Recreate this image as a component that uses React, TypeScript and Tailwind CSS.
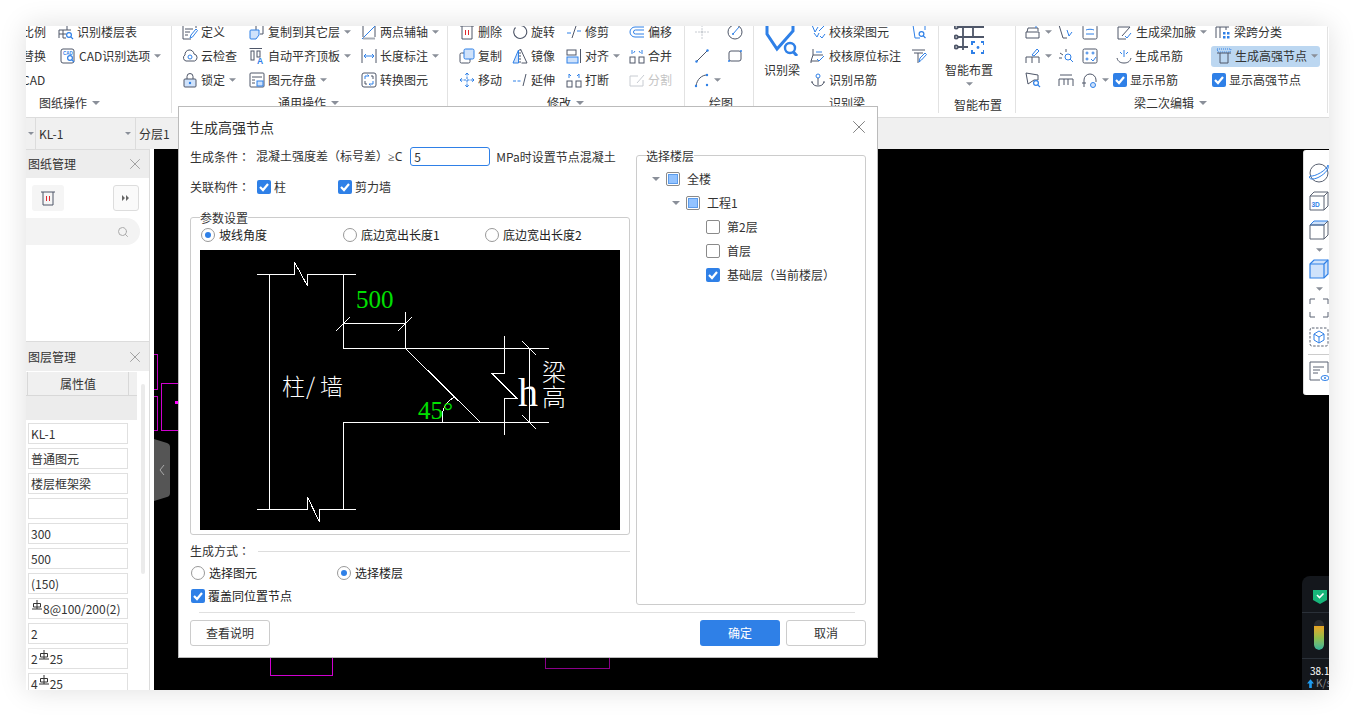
import React from 'react';
import { X, Search } from 'lucide-react';

const B = '#2f80e7';
const L = '#cfe2fb';
const R = '#e0282e';

const Ic: React.FC<{ children: React.ReactNode; size?: string }> = ({ children, size = 'w-4 h-4' }) => (
  <svg viewBox="0 0 16 16" className={`${size} shrink-0`} fill="none" stroke="#4e5668" strokeWidth="1">
    {children}
  </svg>
);

const Caret: React.FC<{ cls?: string }> = ({ cls = 'w-[7px] h-1 ml-[4px]' }) => (
  <svg viewBox="0 0 8 4" className={`${cls} shrink-0`}>
    <path d="M0 0H8L4 4Z" fill="#8a8f99" />
  </svg>
);

const Mag = ({ x = 11, y = 11 }: { x?: number; y?: number }) => (
  <g stroke={B} strokeWidth="1.2">
    <circle cx={x} cy={y} r="2.4" />
    <path d={`M${x + 1.8} ${y + 1.8}L${x + 4} ${y + 4}`} />
  </g>
);

const icons: Record<string, React.ReactNode> = {
  floorTable: <><path d="M1 14V6H13M1 10H8M5 6V14H8M9 1V6" /><Mag /></>,
  cadOpt: <><rect x="1" y="1" width="13" height="14" rx="2" /><text x="3" y="6.5" fontSize="4.5" fill={B} stroke="none" fontFamily="Liberation Sans" fontWeight="700">CAD</text><Mag x={10} y={10} /></>,
  define: <><path d="M14 4V0H1V15H9M3 5H11M3 8H8M3 11H6" /><path d="M8 14L9 11L14 5L15.5 6.5L10.5 13Z" stroke={B} /></>,
  cloud: <><path d="M4 13A3.3 3.3 0 0 1 3 7A4.5 4.5 0 0 1 12 6A3.6 3.6 0 0 1 12.5 13Z" /><circle cx="8" cy="9" r="2" stroke={B} /></>,
  lock: <><path d="M5 7V4.5A3 3 0 0 1 11 4.5V7" /><rect x="2" y="7" width="12" height="8" rx="1" fill={L} /><circle cx="8" cy="11" r="1.2" fill={B} stroke="none" /></>,
  copyLayer: <><path d="M7 6V0M14 0V10H11" /><path d="M1 7Q1 6 2 6H10V11L7 15H2Q1 15 1 14Z" fill={L} stroke={B} /></>,
  autoAlign: <><path d="M0.5 0.5H13" /><rect x="2" y="3" width="3" height="9" /><rect x="8" y="3" width="3" height="6" /><text x="8" y="16" fontSize="8.5" fill={B} stroke="none" fontFamily="Liberation Sans" fontWeight="700">A</text></>,
  save: <><rect x="1" y="1" width="14" height="14" rx="1" /><path d="M3 5H13M3 8H6M3 11H6" /><rect x="8" y="9" width="6" height="5" fill={L} stroke={B} /></>,
  twoPoint: <><path d="M2 1V13M14 1V13" /><path d="M1 15L15 1" stroke={B} /><path d="M2 14.5H14" stroke="#a8adb6" strokeWidth="2" /></>,
  lengthMark: <><path d="M1 1V15M15 1V15" /><path d="M3 8H13M3 8L5 6M3 8L5 10M13 8L11 6M13 8L11 10" stroke={B} /></>,
  convert: <><rect x="1" y="1" width="14" height="14" rx="2" /><path d="M4 7V4H8M8 4L6.5 2.5M12 9V12H8M8 12L9.5 13.5" stroke={B} /><path d="M10 4H12V7M4 9V12H6" /></>,
  trash: <><path d="M1 2H15M3 2V15H13V2" /><path d="M6.5 6V11M9.5 6V11" stroke={R} /></>,
  rotate: <path d="M9 1.5A6.5 6.5 0 1 1 3.5 3.5" strokeWidth="1.1" />,
  trim: <><path d="M1 9H5M11 7H15" stroke={B} /><path d="M10 2L6 14" /></>,
  offset: <path d="M15 3H6A5 5 0 0 0 6 13H15M15 6H6.5A2 2 0 0 0 6.5 10H15" stroke={B} />,
  copy: <><rect x="1" y="5" width="10" height="10" rx="1.5" /><rect x="5" y="1" width="10" height="10" rx="1.5" fill={L} stroke={B} /></>,
  mirror: <><path d="M6.5 2L1 15H6.5Z" fill={L} stroke={B} /><path d="M8.5 1L15 15H9.5" /><path d="M8 1V15" strokeDasharray="2 1" /></>,
  align: <><rect x="1" y="2" width="9" height="5" /><rect x="1" y="9" width="11" height="6" fill={L} stroke={B} /><path d="M14.5 1V15" /></>,
  merge: <><rect x="1" y="9" width="5" height="6" /><rect x="10" y="9" width="5" height="6" /><path d="M3 2V6M13 2V6M6 3L4.5 5M10 3L11.5 5" stroke={B} /></>,
  move: <path d="M8 1V15M1 8H15M8 1L6 3M8 1L10 3M8 15L6 13M8 15L10 13M1 8L3 6M1 8L3 10M15 8L13 6M15 8L13 10" stroke={B} strokeDasharray="2.5 1" />,
  extend: <><path d="M1 9H9" stroke={B} strokeDasharray="3 1.5" /><path d="M14 2L11 14" /></>,
  breakAt: <><rect x="1" y="9" width="5" height="6" /><rect x="10" y="9" width="5" height="6" /><path d="M3 6V2L5 4M13 6V2L11 4" stroke={B} /></>,
  split: <g stroke="#c8ccd2"><path d="M9 4H1V14H14V8" /><path d="M8 11L15 3" /></g>,
  point: <g stroke="#c8ccd2"><path d="M8 1V6M8 10V15M1 8H6M10 8H15" strokeDasharray="2 1" /><circle cx="8" cy="8" r="1" fill="#c8ccd2" /></g>,
  clock: <><circle cx="8" cy="8" r="7" /><path d="M6 10L12 3" stroke={B} /><circle cx="6" cy="10" r="1" fill={B} stroke="none" /></>,
  line: <><path d="M3 13L13 3" /><circle cx="2.5" cy="13.5" r="1.2" fill={B} stroke="none" /><circle cx="13.5" cy="2.5" r="1.2" fill={B} stroke="none" /></>,
  rect: <><rect x="2" y="3" width="12" height="10" rx="2" /><circle cx="2" cy="13" r="1" fill={B} stroke="none" /><circle cx="14" cy="3" r="1" fill={B} stroke="none" /></>,
  arc: <><path d="M2 14C3 7 8 3 13 3" /><circle cx="2" cy="14" r="1.2" fill={B} stroke="none" /><circle cx="13" cy="3" r="1.2" fill={B} stroke="none" /><circle cx="13" cy="13" r="1.2" fill={B} stroke="none" /></>,
  checkBeam: <g stroke={B}><path d="M2 1L5 8L8 3M8 1H14M4 9L7 13L9 9" /><path d="M9 7L14 2" /><path d="M10 12L12 14L15 10" /></g>,
  checkMark: <><path d="M3 1V7H13M3 7L1 13H9M1 13V15" /><path d="M6 4H12M7 11L9 13L14 8" stroke={B} /></>,
  hanger: <><circle cx="8" cy="4" r="2" stroke={B} /><path d="M8 6V13M2 10C3 13 5 14 8 14C11 14 13 13 14 10" /><path d="M1 10H3M13 10H15" /></>,
  frameQ: <g stroke={B}><path d="M1 1H15M2 1L4 14H9M14 1V6" /><Mag x={10.5} y={10} /></g>,
  pen: <><path d="M1 2H14M3 5H12M7 5V15" /><path d="M8 14L9 10L14 5L15.5 6.5L10.5 12Z" stroke={B} /></>,
  s1: <><path d="M2 8L3 4H13V7M1 14V8H14V14H1" /><path d="M5 1H11V4" stroke={B} /></>,
  s2: <><path d="M1 1H13M1 1L5 14H9" /><path d="M9 6L11 12L14 8" stroke={B} /></>,
  s3: <><rect x="1" y="1" width="14" height="14" rx="1.5" /><path d="M4 6C6 5 10 5 12 6M4 10H12" stroke={B} /></>,
  s4: <><path d="M1 15V9H14V15M7 9V15" /><path d="M7 7L12 1L14 3L9 8Z" stroke={B} /></>,
  s5: <><path d="M8 1L8 4M2 5L5 7M1 10L4 10" /><circle cx="10" cy="9" r="3" stroke={B} /><path d="M12 11L15 14" stroke={B} /></>,
  s6: <><rect x="1" y="1" width="14" height="14" rx="1.5" /><circle cx="5" cy="5" r="1" stroke={B} /><circle cx="11" cy="5" r="1" stroke={B} /><circle cx="5" cy="11" r="1" stroke={B} /><path d="M9 11L11 13L14 9" stroke={B} /></>,
  s7: <><path d="M1 1L13 3V8H9L3 12Z" /><Mag x={11} y={11} /></>,
  s8: <path d="M2 3H14M1 7H15M1 7V14M15 7V14M6 7V13M10 7V13" />,
  s9: <><path d="M2 15V8A6 6 0 0 1 14 8V10" /><path d="M0 11H4" /><circle cx="11" cy="13" r="2.5" fill={L} stroke={B} /></>,
  haunch: <><path d="M1 15V3H13M1 15H9" /><path d="M13 3L5 12" /><path d="M8 12L10 14L14 9" stroke={B} /></>,
  hang2: <><path d="M8 2V9M4 4L6 6M12 4L10 6" stroke={B} /><path d="M1 10C2 14 5 15 8 15C11 15 14 14 15 10" /></>,
  span: <><path d="M1 14V3H14M11 3V6" /><path d="M5 3V14" /><g fill={B} stroke="none"><rect x="8" y="8" width="2.5" height="2.5" /><rect x="12" y="8" width="2.5" height="2.5" /><rect x="8" y="12" width="2.5" height="2.5" /><rect x="12" y="12" width="2.5" height="2.5" /></g></>,
  node: <><path d="M1 1H15L14 4H2Z" stroke={B} strokeDasharray="1 1" /><path d="M1 5H15M4 5V15H12V5" /></>,
};

const Icon = ({ name }: { name: string }) => <Ic>{icons[name]}</Ic>;

// centered fullwidth punctuation comes from the TC cut
const P: React.FC<{ children: React.ReactNode }> = ({ children }) => <span className="font-['Noto_Sans_CJK_TC']">{children}</span>;

const Check: React.FC<{ on?: boolean }> = ({ on }) =>
  on ? (
    <span className="w-[14px] h-[14px] rounded-[2px] bg-[#2f80e7] flex items-center justify-center shrink-0">
      <svg viewBox="0 0 14 14" className="w-[14px] h-[14px]" fill="none" stroke="#fff" strokeWidth="2.2">
        <path d="M3 7L6 10L11 4" />
      </svg>
    </span>
  ) : (
    <span className="w-[14px] h-[14px] rounded-[2px] border border-[#8a8a8a] bg-white shrink-0" />
  );

const Radio: React.FC<{ on?: boolean }> = ({ on }) => (
  <span className="w-[14px] h-[14px] rounded-full border border-[#999] bg-white flex items-center justify-center shrink-0">
    {on && <span className="w-[6px] h-[6px] rounded-full bg-[#2f80e7]" />}
  </span>
);

const Item: React.FC<{ icon?: string; text?: string; caret?: boolean; cls?: string; dim?: boolean }> = ({ icon, text, caret, cls = '', dim }) => (
  <div className={`flex items-center h-6 whitespace-nowrap ${cls}`}>
    {icon && <Icon name={icon} />}
    {text && <span className={`ml-[3px] ${dim ? 'text-[#c4c4c4]' : ''}`}>{text}</span>}
    {caret && <Caret />}
  </div>
);

const Col: React.FC<{ cls: string; children: React.ReactNode }> = ({ cls, children }) => <div className={`flex flex-col shrink-0 ${cls}`}>{children}</div>;

const Group: React.FC<{ width: string; labelCls: string; label: string; caret?: boolean; children: React.ReactNode }> = ({ width, labelCls, label, caret = true, children }) => (
  <div className={`h-[87px] shrink-0 border-r border-[#e2e2e2] overflow-hidden ${width}`}>
    <div className="flex h-[72px] -mt-[6px]">{children}</div>
    <div className={`flex items-center h-[22px] ${labelCls}`}>
      <span>{label}</span>
      {caret && <Caret cls="w-2 h-1 ml-[5px]" />}
    </div>
  </div>
);

const Ribbon = () => (
  <div className="flex h-[92px] bg-white border-b border-[#dcdcdc] shrink-0">
    <Group width="w-[146px]" labelCls="pl-[13px]" label="图纸操作">
      <Col cls="w-[35px] -ml-[4px]">
        <div className="h-6 leading-6">比例</div>
        <div className="h-6 leading-6">替换</div>
        <div className="h-6 leading-6">CAD</div>
      </Col>
      <Col cls="">
        <Item icon="floorTable" text="识别楼层表" cls="ml-px" />
        <Item icon="cadOpt" text="CAD识别选项" caret cls="ml-[3px]" />
      </Col>
    </Group>
    <Group width="w-[276px]" labelCls="pl-[106px]" label="通用操作">
      <Col cls="w-[67px] ml-[10px]">
        <Item icon="define" text="定义" />
        <Item icon="cloud" text="云检查" />
        <Item icon="lock" text="锁定" caret />
      </Col>
      <Col cls="w-[112px]">
        <Item icon="copyLayer" text="复制到其它层" caret />
        <Item icon="autoAlign" text="自动平齐顶板" caret />
        <Item icon="save" text="图元存盘" caret />
      </Col>
      <Col cls="">
        <Item icon="twoPoint" text="两点辅轴" caret />
        <Item icon="lengthMark" text="长度标注" caret />
        <Item icon="convert" text="转换图元" />
      </Col>
    </Group>
    <Group width="w-[237px]" labelCls="pl-[99px]" label="修改">
      <Col cls="w-[53px] ml-[11px]">
        <Item icon="trash" text="删除" />
        <Item icon="copy" text="复制" />
        <Item icon="move" text="移动" />
      </Col>
      <Col cls="w-[54px]">
        <Item icon="rotate" text="旋转" />
        <Item icon="mirror" text="镜像" />
        <Item icon="extend" text="延伸" />
      </Col>
      <Col cls="w-[63px]">
        <Item icon="trim" text="修剪" />
        <Item icon="align" text="对齐" caret />
        <Item icon="breakAt" text="打断" />
      </Col>
      <Col cls="">
        <Item icon="offset" text="偏移" />
        <Item icon="merge" text="合并" />
        <Item icon="split" text="分割" dim />
      </Col>
    </Group>
    <Group width="w-[69px]" labelCls="pl-[24px]" label="绘图" caret={false}>
      <Col cls="w-[33px] ml-[9px]">
        <Item icon="point" />
        <Item icon="line" />
        <Item icon="arc" caret />
      </Col>
      <Col cls="">
        <Item icon="clock" />
        <Item icon="rect" />
      </Col>
    </Group>
    <Group width="w-[185px]" labelCls="pl-[75px]" label="识别梁" caret={false}>
      <Col cls="w-[56px] items-center">
        <svg viewBox="0 0 36 36" className="w-9 h-9 shrink-0" fill="none" stroke={B} strokeWidth="3">
          <path d="M3 0V14L13 29L29 11V0" />
          <circle cx="26" cy="28" r="5" strokeWidth="2.4" />
          <path d="M29.5 32L33 36" />
        </svg>
        <span className="mt-[5px] leading-[18px]">识别梁</span>
      </Col>
      <Col cls="w-[101px]">
        <Item icon="checkBeam" text="校核梁图元" />
        <Item icon="checkMark" text="校核原位标注" />
        <Item icon="hanger" text="识别吊筋" />
      </Col>
      <Col cls="">
        <Item icon="frameQ" />
        <Item icon="pen" />
      </Col>
    </Group>
    <Group width="w-[77px]" labelCls="pl-[15px] mt-[2px]" label="智能布置" caret={false}>
      <Col cls="w-[48px] ml-[6px] items-center">
        <svg viewBox="0 0 30 34" className="w-[30px] h-[34px] shrink-0" fill="none" stroke="#4e5668" strokeWidth="1.8">
          <path d="M9 0V30M19 0V17M4 7H30M4 17H30M4 27H14" />
          <circle cx="2.2" cy="7" r="1.6" />
          <circle cx="2.2" cy="17" r="1.6" />
          <circle cx="2.2" cy="27" r="1.6" />
          <path d="M21 22H18V25M27 22H30V25M21 33H18V30M27 33H30V30" stroke={B} strokeWidth="2" />
          <circle cx="24" cy="27.5" r="1.4" fill={B} stroke="none" />
        </svg>
        <span className="mt-[7px] leading-[18px] whitespace-nowrap">智能布置</span>
        <Caret cls="w-[7px] h-1 mt-[3px]" />
      </Col>
    </Group>
    <Group width="w-[312px]" labelCls="pl-[118px]" label="梁二次编辑">
      <Col cls="w-[33px] ml-[9px]">
        <Item icon="s1" caret />
        <Item icon="s4" caret />
        <Item icon="s7" />
      </Col>
      <Col cls="w-[24px]">
        <Item icon="s2" />
        <Item icon="s5" />
        <Item icon="s8" />
      </Col>
      <Col cls="w-[31px]">
        <Item icon="s3" />
        <Item icon="s6" />
        <Item icon="s9" caret />
      </Col>
      <Col cls="w-[98px]">
        <Item icon="haunch" text="生成梁加腋" caret cls="pl-[4px]" />
        <Item icon="hang2" text="生成吊筋" cls="pl-[3px]" />
        <div className="flex items-center h-6">
          <Check on />
          <span className="ml-[3px]">显示吊筋</span>
        </div>
      </Col>
      <Col cls="">
        <Item icon="span" text="梁跨分类" cls="pl-[4px]" />
        <div className="h-6 flex items-center">
          <div className="flex items-center h-[21px] w-[109px] pl-[5px] rounded-[3px] bg-[#bcd7f1] whitespace-nowrap">
            <Icon name="node" />
            <span className="ml-[3px]">生成高强节点</span>
            <Caret />
          </div>
        </div>
        <div className="flex items-center h-6 pl-px">
          <Check on />
          <span className="ml-[3px]">显示高强节点</span>
        </div>
      </Col>
    </Group>
  </div>
);

const ToolRow = () => (
  <div className="flex h-[31px] bg-[#f0f0f0] shrink-0">
    <div className="w-[10px] border-r border-[#dcdcdc] flex items-center justify-center">
      <Caret cls="w-[6px] h-[3px]" />
    </div>
    <div className="w-[100px] border-r border-[#dcdcdc] flex items-center justify-between pl-[3px] pr-[4px]">
      <span>KL-1</span>
      <Caret cls="w-[6px] h-[3px]" />
    </div>
    <div className="pl-[3px] flex items-center">分层1</div>
  </div>
);

const Rebar = () => (
  <svg viewBox="0 0 12 12" className="inline-block w-3 h-3 align-[2px]" fill="none" stroke="#333" strokeWidth="1">
    <path d="M6 0V9M1 9H11M2.5 3.5H9.5V7H2.5Z" />
  </svg>
);

const rows: React.ReactNode[] = [
  'KL-1',
  '普通图元',
  '楼层框架梁',
  '',
  '300',
  '500',
  '(150)',
  <span key="a"><Rebar />8@100/200(2)</span>,
  '2',
  <span key="b">2<Rebar />25</span>,
  <span key="c">4<Rebar />25</span>,
];

const LeftPanels = () => (
  <div className="w-[128px] bg-white shrink-0 overflow-hidden">
    <div className="w-[124px] h-full border-r border-[#dcdcdc]">
      <div className="h-[188px] border-t border-[#dcdcdc]">
        <div className="h-[28px] bg-[#ededed] flex items-center justify-between pl-[2px] pr-[5px]">
          <span>图纸管理</span>
          <X className="w-[18px] h-[18px] text-[#999]" strokeWidth={1.2} />
        </div>
        <div className="flex justify-between mt-[7px] pl-[6px] pr-[10px]">
          <div className="w-8 h-[26px] rounded-[3px] bg-[#f5f5f5] flex items-center justify-center">
            <Icon name="trash" />
          </div>
          <div className="w-[26px] h-[26px] rounded-[3px] border border-[#ddd] bg-[#fafafa] flex items-center justify-center">
            <svg viewBox="0 0 8 6" className="w-2 h-[6px]"><path d="M0 0L3 3L0 6ZM4 0L7 3L4 6Z" fill="#666" /></svg>
          </div>
        </div>
        <div className="mt-[7px] w-[114px] h-[27px] rounded-r-full bg-[#f3f3f3] flex items-center justify-end pr-[11px]">
          <Search className="w-3 h-3 text-[#aaa]" />
        </div>
      </div>
      <div className="h-[4px]" />
      <div className="border-t border-[#dcdcdc] relative">
        <div className="h-[29px] bg-[#eeeeee] flex items-center justify-between pl-[2px] pr-[5px]">
          <span>图层管理</span>
          <X className="w-[18px] h-[18px] text-[#999]" strokeWidth={1.2} />
        </div>
        <div className="w-[111px] h-6 mt-px bg-[#f0f0f0] border-b border-[#d8d8d8] flex">
          <div className="ml-px w-[102px] border-x border-[#d8d8d8] flex items-center justify-center">属性值</div>
        </div>
        <div className="w-[111px] h-6 bg-[#ececec]" />
        <div className="flex flex-col gap-1 pt-[3px] pl-[2px]">
          {rows.map((r, i) => (
            <div key={i} className="w-[100px] h-[21px] border border-[#e0e0e0] pl-[2px] leading-[19px] whitespace-nowrap">
              {r}
            </div>
          ))}
        </div>
        <div className="absolute left-[115px] top-[42px] w-[4px] h-[190px] rounded-full bg-[#ebebeb]" />
      </div>
    </div>
  </div>
);

const Toolbar = () => (
  <div className="absolute right-0 top-px w-[26px] h-[245px] bg-white rounded-l-[3px] border-l border-[#ddd] pt-[13px] pl-[5px] flex flex-col">
    <svg viewBox="0 0 20 20" className="w-5 h-5" fill="none" stroke="#5a6272">
      <circle cx="10" cy="10" r="9" />
      <path d="M1 13C6 14 18 7 19 2" stroke={B} />
      <path d="M1 13C-1 16 3 17 8 15C13 13 21 7 19 2" stroke={B} />
    </svg>
    <svg viewBox="0 0 20 20" className="w-5 h-5 mt-2" fill="none" stroke="#5a6272">
      <path d="M1 5H15V19H1ZM1 5L5 1H19V15L15 19M15 5L19 1" />
      <text x="2.5" y="16" fontSize="6.5" fill={B} stroke="none" fontWeight="700" fontFamily="Liberation Sans">3D</text>
    </svg>
    <svg viewBox="0 0 20 20" className="w-5 h-5 mt-[9px]" fill="none" stroke="#5a6272">
      <path d="M1 5L5 1H19L15 5Z" fill={L} stroke={B} />
      <path d="M1 5H15V19H1ZM15 5L19 1V15L15 19" />
    </svg>
    <Caret cls="w-[7px] h-1 mt-2 ml-[7px]" />
    <svg viewBox="0 0 20 20" className="w-5 h-5 mt-[7px]" fill="none" stroke={B} strokeWidth="1.2">
      <path d="M1 5L5 1H19V15L15 19H1Z" fill={L} />
      <path d="M1 5H15V19M15 5L19 1" />
    </svg>
    <Caret cls="w-[7px] h-1 mt-2 ml-[7px]" />
    <svg viewBox="0 0 20 20" className="w-5 h-5 mt-[7px]" fill="none" stroke="#5a6272">
      <path d="M1 6V1H6M14 1H19V6M1 14V19H6M19 14V19H14" />
    </svg>
    <svg viewBox="0 0 20 20" className="w-5 h-5 mt-[9px]" fill="none" stroke="#5a6272">
      <rect x="1" y="1" width="18" height="18" rx="2" strokeDasharray="2.5 1.5" />
      <path d="M10 4L15 7V13L10 16L5 13V7ZM5 7L10 10L15 7M10 10V16" stroke={B} />
    </svg>
    <div className="h-px bg-[#ccc] mt-[7px] -ml-[1px]" />
    <svg viewBox="0 0 20 20" className="w-5 h-5 mt-[6px]" fill="none" stroke="#5a6272">
      <path d="M19 12V1H1V19H11M4 6H15M4 9H11M4 12H9" />
      <ellipse cx="16" cy="17" rx="4" ry="2.5" stroke={B} />
      <circle cx="16" cy="17" r="1" fill={B} stroke="none" />
    </svg>
  </div>
);

const NetWidget = () => (
  <div className="absolute right-0 bottom-0 w-[27px] h-[114px] bg-[#14171c] rounded-tl-[8px] flex flex-col overflow-hidden text-[10px]">
    <svg viewBox="0 0 14 15" className="w-[14px] h-[15px] ml-[11px] mt-[13px] shrink-0">
      <path d="M0 1H14V11L7 15L0 11Z" fill="#17b57a" />
      <path d="M4 6L6.5 8.5L10.5 4.5" stroke="#fff" strokeWidth="1.6" fill="none" />
    </svg>
    <div className="h-px bg-[#2a3038] mt-[8px] shrink-0" />
    <div className="w-[10px] h-[30px] ml-[12px] mt-[7px] rounded-full overflow-hidden bg-[#2b2d30] flex flex-col justify-end shrink-0">
      <div className="h-[24px] bg-gradient-to-b from-[#e8a322] via-[#8fbe4a] to-[#2bb39b] rounded-b-full" />
    </div>
    <div className="h-px bg-[#2a3038] mt-[8px] shrink-0" />
    <div className="text-white mt-[6px] pl-[8px] whitespace-nowrap h-3 leading-3 shrink-0">38.1</div>
    <div className="pl-[5px] flex items-center whitespace-nowrap text-[#8b8f96] h-3 leading-3 shrink-0">
      <svg viewBox="0 0 8 10" className="w-[7px] h-[9px] mr-[2px] shrink-0"><path d="M4 0L8 5H5.5V10H2.5V5H0Z" fill="#1e9bf0" /></svg>
      K/s
    </div>
  </div>
);

const Canvas = () => (
  <div className="flex-1 bg-black relative overflow-hidden">
    <div className="absolute left-[-10px] top-[205px] w-[14px] h-[36px] border border-[#c000c0]" />
    <div className="absolute left-[-10px] top-[247px] w-[14px] h-[35px] border border-[#c000c0]" />
    <div className="absolute left-[7px] top-[234px] w-[40px] h-[48px] border border-[#d000d0]" />
    <div className="absolute left-[21px] top-[252px] w-[3px] h-[3px] bg-[#ff00ff]" />
    <div className="absolute left-[116px] top-[480px] w-[63px] h-[47px] border border-[#d000d0]" />
    <div className="absolute left-[391px] top-[480px] w-[65px] h-[40px] border border-[#8a008a]" />
    <svg viewBox="0 0 16 62" className="absolute left-0 top-[290px] w-4 h-[62px]">
      <path d="M0 0L13 4Q16 5 16 8V54Q16 57 13 58L0 62Z" fill="#555" />
      <path d="M10 26L6 31L10 36" stroke="#aaa" fill="none" />
    </svg>
    <Toolbar />
    <NetWidget />
  </div>
);

const Diagram = () => (
  <svg viewBox="0 0 420 280" className="w-[420px] h-[280px] bg-black" fill="none" stroke="#fff" strokeWidth="1" shapeRendering="crispEdges">
    <path d="M57 24.5H94.5V12L107.5 36V24.5H156M69.5 24.5V259.5M143.5 24.5V98.5H349M143.5 73.5H205.5M205.5 62V98.5M136 81L150 67M198 81L212 67" />
    <path d="M205 98L280 172M143.5 259.5V172.5H349M57 259.5H107.5V247L119.5 272V259.5H156M304.5 86V123.5H292L317 148.5H304.5V185M329.5 98V172M322 91L336 105M322 165L336 179" />
    <path d="M255 147C248 150 240 158 243 172" />
    <g stroke="none" fontFamily="Liberation Serif, serif">
      <text x="156" y="58" fontSize="25" fill="#00e000">500</text>
      <text x="218" y="169" fontSize="25" fill="#00e000">45°</text>
      <text x="318" y="156" fontSize="40" fill="#fff">h</text>
    </g>
    <g stroke="none" fontFamily="Noto Sans CJK SC, sans-serif" fontWeight="300" fill="#fff">
      <text x="82 106 120" y="145" fontSize="23">柱/墙</text>
      <text x="342" y="131" fontSize="24">梁</text>
      <text x="342" y="156" fontSize="24">高</text>
    </g>
  </svg>
);

const TreeBox = () => (
  <span className="w-[14px] h-[14px] rounded-[2px] border border-[#8a8a8a] bg-white flex items-center justify-center shrink-0">
    <span className="w-[10px] h-[10px] bg-[#93c3ff] border border-[#5c9ceb]" />
  </span>
);

const Dialog = () => (
  <div className="absolute left-[152px] top-[80px] w-[700px] h-[552px] bg-white border border-[#bbbbbb] z-10 flex flex-col pl-[11px]">
    <div className="h-[40px] flex items-center justify-between pr-[7px] shrink-0">
      <span className="text-sm">生成高强节点</span>
      <X className="w-[22px] h-[22px] text-[#777]" strokeWidth={1} />
    </div>
    <div className="flex gap-[6px] h-[465px] shrink-0">
      <div className="w-[440px]">
        <div className="flex items-center h-[19px] whitespace-nowrap">
          <span className="w-[66px]">生成条件<P>：</P></span>
          <span>混凝土强度差<P>（</P>标号差<P>）</P><span className="font-['Noto_Sans']">≥C</span></span>
          <div className="w-[80px] h-[19px] ml-[8px] border border-[#2f80e7] rounded-[3px] pl-[3px] leading-[17px]">5</div>
          <span className="ml-[6px]">MPa时设置节点混凝土</span>
        </div>
        <div className="flex items-center h-5 mt-[11px]">
          <span className="w-[67px]">关联构件<P>：</P></span>
          <div className="w-[81px] flex items-center">
            <Check on />
            <span className="ml-[3px]">柱</span>
          </div>
          <Check on />
          <span className="ml-[3px]">剪力墙</span>
        </div>
        <div className="relative mt-[20px] h-[318px] border border-[#cccccc] rounded-[3px] px-[9px] pt-[8px]">
          <span className="absolute left-[9px] -top-[9px] bg-white leading-[18px]">参数设置</span>
          <div className="flex h-[18px] ml-px text-[#222]">
            <div className="w-[142px] flex items-center"><Radio on /><span className="ml-1">坡线角度</span></div>
            <div className="w-[142px] flex items-center"><Radio /><span className="ml-1">底边宽出长度1</span></div>
            <div className="flex items-center"><Radio /><span className="ml-1">底边宽出长度2</span></div>
          </div>
          <div className="mt-[6px]"><Diagram /></div>
        </div>
        <div className="flex items-center h-5 mt-[6px]">
          <span>生成方式<P>：</P></span>
          <div className="flex-1 h-px bg-[#dddddd] ml-2" />
        </div>
        <div className="flex h-[18px] mt-[3px] ml-px text-[#222]">
          <div className="w-[146px] flex items-center"><Radio /><span className="ml-1">选择图元</span></div>
          <div className="flex items-center"><Radio on /><span className="ml-1">选择楼层</span></div>
        </div>
        <div className="flex items-center h-[18px] mt-[5px] ml-px text-[#222]">
          <Check on />
          <span className="ml-[3px]">覆盖同位置节点</span>
        </div>
      </div>
      <div className="w-[230px] pt-2">
        <div className="relative h-[450px] border border-[#cccccc] rounded-[3px] pt-[11px]">
          <span className="absolute left-[9px] -top-[9px] bg-white leading-[18px]">选择楼层</span>
          <div className="flex items-center h-6 pl-[15px]"><Caret cls="w-2 h-1" /><span className="ml-[6px]"><TreeBox /></span><span className="ml-[7px]">全楼</span></div>
          <div className="flex items-center h-6 pl-[35px]"><Caret cls="w-2 h-1" /><span className="ml-[6px]"><TreeBox /></span><span className="ml-[7px]">工程1</span></div>
          <div className="flex items-center h-6 pl-[69px]"><Check /><span className="ml-[7px]">第2层</span></div>
          <div className="flex items-center h-6 pl-[69px]"><Check /><span className="ml-[7px]">首层</span></div>
          <div className="flex items-center h-6 pl-[69px]"><Check on /><span className="ml-[7px]">基础层<P>（</P>当前楼层<P>）</P></span></div>
        </div>
      </div>
    </div>
    <div className="h-px bg-[#e0e0e0] ml-[9px] mr-[22px] shrink-0" />
    <div className="flex justify-between pr-[11px] mt-[7px]">
      <button className="w-[80px] h-[26px] border border-[#cccccc] rounded-[3px] bg-white">查看说明</button>
      <div className="flex gap-[6px]">
        <button className="w-[80px] h-[26px] rounded-[3px] bg-[#2f80e7] text-white">确定</button>
        <button className="w-[80px] h-[26px] border border-[#cccccc] rounded-[3px] bg-white">取消</button>
      </div>
    </div>
  </div>
);

export default function App() {
  return (
    <div className="w-[1355px] h-[716px] bg-white p-[26px] text-xs text-[#333] font-['Noto_Sans_CJK_SC','Noto_Sans',sans-serif]">
      <div className="w-[1303px] h-[664px] relative flex flex-col bg-white overflow-hidden rounded-tr-[4px] shadow-[0_0_28px_rgba(0,0,0,0.13)]">
        <Ribbon />
        <ToolRow />
        <div className="flex flex-1 min-h-0">
          <LeftPanels />
          <Canvas />
        </div>
        <Dialog />
      </div>
    </div>
  );
}
